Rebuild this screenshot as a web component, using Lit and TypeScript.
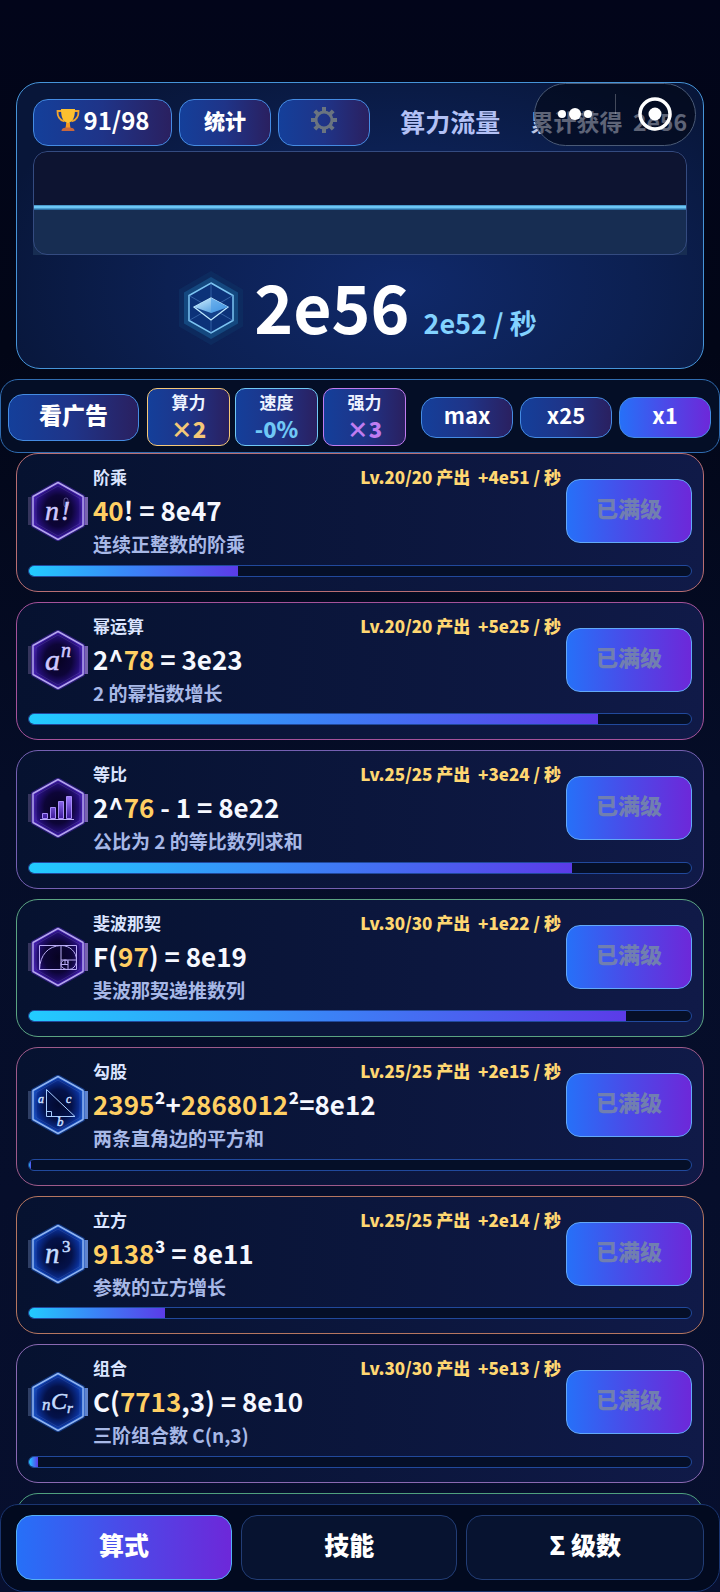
import { LitElement, html, svg, css, nothing } from "lit";
import { customElement, property, state } from "lit/decorators.js";
import { classMap } from "lit/directives/class-map.js";

type Tone = "violet" | "blue";

interface Upgrade {
  id: string;
  name: string;
  formula: Array<[string, boolean]>;
  desc: string;
  level: string;
  rate: string;
  progress: number;
  tone: Tone;
  border: string;
}

const UPGRADES: Upgrade[] = [
  { id: "factorial", name: "阶乘", formula: [["40", true], ["! = 8e47", false]], desc: "连续正整数的阶乘", level: "20/20", rate: "+4e51", progress: 31.5, tone: "violet", border: "coral" },
  { id: "power", name: "幂运算", formula: [["2^", false], ["78", true], [" = 3e23", false]], desc: "2 的幂指数增长", level: "20/20", rate: "+5e25", progress: 86, tone: "violet", border: "pink" },
  { id: "geometric", name: "等比", formula: [["2^", false], ["76", true], [" - 1 = 8e22", false]], desc: "公比为 2 的等比数列求和", level: "25/25", rate: "+3e24", progress: 82, tone: "violet", border: "purple" },
  { id: "fibonacci", name: "斐波那契", formula: [["F(", false], ["97", true], [") = 8e19", false]], desc: "斐波那契递推数列", level: "30/30", rate: "+1e22", progress: 90.2, tone: "violet", border: "green" },
  { id: "pythagoras", name: "勾股", formula: [["2395", true], ["²+", false], ["2868012", true], ["²=8e12", false]], desc: "两条直角边的平方和", level: "25/25", rate: "+2e15", progress: 0.3, tone: "blue", border: "rose" },
  { id: "cube", name: "立方", formula: [["9138", true], ["³ = 8e11", false]], desc: "参数的立方增长", level: "25/25", rate: "+2e14", progress: 20.5, tone: "blue", border: "orange" },
  { id: "combination", name: "组合", formula: [["C(", false], ["7713", true], [",3) = 8e10", false]], desc: "三阶组合数 C(n,3)", level: "30/30", rate: "+5e13", progress: 1.3, tone: "blue", border: "lilac" },
];

@customElement("hex-icon")
export class HexIcon extends LitElement {
  @property() kind = "";
  @property() tone: Tone = "violet";

  static styles = css`
    :host { display: block; width: 60px; height: 60px; }
    svg { display: block; width: 100%; height: 100%; }
    text {
      font-family: "Liberation Serif", serif;
      font-style: italic;
      font-weight: 400;
      fill: #cfc8ff;
      stroke: #cfc8ff;
      stroke-width: .5;
    }
    .upright { font-style: normal; }
    .blue text { fill: #c4dcff; stroke: #c4dcff; }
    .line { fill: none; stroke: #b9acf5; stroke-width: 1; }
    .blue .line { stroke: #a9cdff; }
  `;

  private glyph() {
    switch (this.kind) {
      case "factorial":
        return svg`<text x="17" y="39" font-size="28">n</text><text x="33" y="39" font-size="27">!</text>
          <rect class="line" x="36" y="17" width="4" height="9" rx="2" opacity=".45"/>`;
      case "power":
        return svg`<text x="17" y="40" font-size="30">a</text><text x="33" y="27" font-size="20">n</text>`;
      case "geometric":
        return svg`<path d="M12 41.500H46" class="line" stroke-width=".8"/>
          <path d="M14.500 40.500v-5h5v5zM22.500 40.500v-11h5v11zM30.500 40.500v-17h5v17zM38.500 40.500v-22h5v22z" fill="url(#bar)" stroke="#a78bfa" stroke-width="1"/>`;
      case "fibonacci":
        return svg`<path class="line" d="M11.500 18.500h37v24h-37zM33 18.500v24M33 33h15.500M40 33v9.500M33 37.500h7M37 33v4.500"/>
          <path class="line" stroke-width="1.200" d="M11.500 42.500C12 28 20 19 33 18.500C42 18.500 48.500 25 48.500 33C48.500 39 45 42.500 40 42.500C36 42.500 33 40 33 37.500C33 35 35 33 37 33C39 33 40 34 40 36"/>`;
      case "pythagoras":
        return svg`<path class="line" stroke-width="1.200" d="M18.500 14.500V41.500H47ZM18.500 36.500h5v5"/>
          <text x="10" y="28" font-size="12">a</text><text x="38" y="28" font-size="12">c</text><text x="29" y="51" font-size="13">b</text>`;
      case "cube":
        return svg`<text x="17" y="39" font-size="29">n</text><text class="upright" x="34" y="28" font-size="17">3</text>`;
      case "combination":
        return svg`<text x="14" y="38" font-size="17">n</text><text x="23" y="37" font-size="24">C</text><text x="39" y="41" font-size="15">r</text>`;
      default:
        return nothing;
    }
  }

  render() {
    const v = this.tone === "violet";
    const edge = v ? "#b3a4ee" : "#8fb4f2";
    const glow = v ? "#4a22b8" : "#1a55c8";
    const hex = "M30 1.500L55 15.500V44.500L30 58.500L5 44.500V15.500Z";
    return html`<svg viewBox="0 0 60 60" class=${this.tone} aria-hidden="true">
      <defs>
        <radialGradient id="core" cx=".5" cy=".5" r=".55">
          <stop offset="0" stop-color=${v ? "#070322" : "#020a30"} />
          <stop offset=".5" stop-color=${v ? "#0d0538" : "#04124a"} />
          <stop offset=".8" stop-color=${v ? "#260f7c" : "#0a2f96"} />
          <stop offset="1" stop-color=${glow} />
        </radialGradient>
        <linearGradient id="bar" x1="0" y1="0" x2="0" y2="1">
          <stop offset="0" stop-color="#9f7bff" />
          <stop offset="1" stop-color="#3b1a9a" />
        </linearGradient>
      </defs>
      <rect x="0" y="16" width="8" height="28" fill=${v ? "#4a4570" : "#41527c"} opacity=".7" />
      <rect x="52" y="16" width="8" height="28" fill=${v ? "#7763ae" : "#5f83cc"} />
      <path d=${hex} fill="url(#core)" stroke=${glow} stroke-width="4" stroke-opacity=".5" stroke-linejoin="round" />
      <path d=${hex} fill="none" stroke=${edge} stroke-width="1.500" stroke-linejoin="round" />
      <path d="M30 5L52 17.500V42.500L30 55L8 42.500V17.500Z" fill="none" stroke=${edge} stroke-opacity=".2" stroke-width=".8" />
      ${this.glyph()}
    </svg>`;
  }
}

@customElement("upgrade-card")
export class UpgradeCard extends LitElement {
  @property({ attribute: false }) item?: Upgrade;

  static styles = css`
    :host { display: block; flex: none; }
    .card {
      border: 1px solid var(--edge);
      border-radius: 22px;
      padding: 10px 11px 14px;
      background: linear-gradient(90deg, #061230, #101a48);
      display: flex;
      flex-direction: column;
      gap: 6px;
    }
    .coral { --edge: #b86e72; }
    .pink { --edge: #a5529a; }
    .purple { --edge: #7560b2; }
    .green { --edge: #5ba482; }
    .rose { --edge: #9e5a8a; }
    .orange { --edge: #b57660; }
    .lilac { --edge: #8a69b2; }
    .mint { --edge: #4fa07e; }
    .empty { min-height: 64px; }
    .main { display: flex; align-items: center; gap: 5px; }
    .body { flex: 1; min-width: 0; }
    .top {
      display: flex;
      justify-content: space-between;
      font-size: 17px;
      line-height: 26px;
    }
    .name { color: #dbe5ff; }
    .level { color: #ffd772; white-space: pre; font-weight: 900; }
    .formula {
      font-size: 26px;
      line-height: 40px;
      color: #f6f8ff;
      white-space: pre;
    }
    .hot { color: #ffcf63; }
    .desc { font-size: 19px; line-height: 1.5; color: #a7b8e6; }
    .name, .formula, .desc { margin: 0; font-weight: 700; }
    .name { font-size: inherit; }
    .buy {
      flex: none;
      width: 126px;
      height: 64px;
      box-sizing: border-box;
      padding: 0 0 8px;
      border: 1px solid #62a8f8;
      border-radius: 14px;
      background: linear-gradient(90deg, #2670f8, #4b4ae8 50%, #6d28d9);
      font: inherit;
      font-size: 22px;
      font-weight: 900;
      color: #717fb0;
    }
    .track {
      height: 12px;
      box-sizing: border-box;
      border: 1px solid #21499c;
      border-radius: 6px;
      background: #050f28;
      overflow: hidden;
    }
    .fill {
      height: 100%;
      background: linear-gradient(90deg, #22ccff, #3b82f6 50%, #5b3be8);
    }
  `;

  render() {
    const u = this.item;
    if (!u) return html`<div class="card mint empty"></div>`;
    return html`<article class=${classMap({ card: true, [u.border]: true })}>
      <div class="main">
        <hex-icon .kind=${u.id} .tone=${u.tone}></hex-icon>
        <div class="body">
          <div class="top">
            <h2 class="name">${u.name}</h2>
            <span class="level">Lv.${u.level} 产出  ${u.rate} / 秒</span>
          </div>
          <p class="formula">${u.formula.map(([t, hot]) => (hot ? html`<span class="hot">${t}</span>` : t))}</p>
          <p class="desc">${u.desc}</p>
        </div>
        <button class="buy" type="button" disabled>已满级</button>
      </div>
      <div class="track" role="progressbar" aria-label=${u.name} aria-valuenow=${u.progress}>
        <div class="fill" style="width:${u.progress}%"></div>
      </div>
    </article>`;
  }
}

@customElement("app-root")
export class AppRoot extends LitElement {
  @state() private amount = "x1";
  @state() private tab = "算式";

  static styles = css`
    :host {
      display: flex;
      flex-direction: column;
      height: 100vh;
      overflow: hidden;
      position: relative;
      box-sizing: border-box;
      padding-top: 82px;
      background: linear-gradient(180deg, #02051a, #020617 22%, #050d28 50%, #070f2e);
      font-family: "Noto Sans CJK SC", sans-serif;
      font-weight: 700;
      color: #fff;
    }
    button { font: inherit; color: inherit; margin: 0; box-sizing: border-box; }

    .panel {
      flex: none;
      margin: 0 16px;
      padding: 16px 16px 15px;
      border: 1px solid #4694d8;
      border-radius: 24px;
      background: radial-gradient(ellipse 62% 90% at 56% 72%, #10296a, #0c2052 55%, #081639);
    }
    .head { display: flex; align-items: center; gap: 7px; }
    .pill {
      height: 47px;
      width: 92px;
      padding: 0 0 6px;
      border: 1px solid #458be2;
      border-radius: 15px;
      background: linear-gradient(90deg, #143f9a, #1f3488 50%, #2a2060);
      font-size: 21px;
      font-weight: 900;
      display: flex;
      align-items: center;
      justify-content: center;
    }
    .wide { width: 139px; gap: 4px; font-size: 24px; font-weight: 700; }
    .trophy { width: 24px; height: 24px; }
    .gear { width: 28px; height: 28px; }
    .title { flex: 1; margin: 0; padding-bottom: 3px; text-align: center; font-size: 25px; line-height: 36px; color: #b3c1f5; }
    .total { padding-bottom: 3px; font-size: 23px; line-height: 36px; color: #bcc6e4; white-space: pre; }
    .chart {
      position: relative;
      margin-top: 5px;
      height: 104px;
      border-radius: 14px 14px 0 0;
      box-sizing: border-box;
      background: #0d1431;
      overflow: hidden;
    }
    .chart::after {
      content: "";
      position: absolute;
      inset: 0;
      border: 1px solid #344b80;
      border-radius: 14px;
    }
    .chart svg { display: block; width: 100%; height: 100%; }
    .balance {
      display: flex;
      align-items: center;
      justify-content: center;
      gap: 10px;
      margin-top: 8px;
      padding-right: 5px;
    }
    .coin { width: 66px; height: 76px; }
    .sum { display: flex; align-items: baseline; gap: 14px; padding-bottom: 6px; }
    .big { font-size: 66px; line-height: 84px; }
    .rate { font-size: 27px; color: #82d2ff; }

    .capsule {
      position: absolute;
      top: 83px;
      right: 24px;
      width: 162px;
      height: 63px;
      box-sizing: border-box;
      border: 1px solid #4a5a76;
      border-radius: 32px;
      background: #00020a80;
      display: flex;
      padding-bottom: 2px;
    }
    .cap { flex: 1; padding: 0; border: 0; background: none; display: grid; place-items: center; }
    .cap svg { width: 40px; height: 40px; }
    .rule { width: 1px; height: 20px; margin-top: 10px; background: #ffffff40; }

    .toolbar {
      flex: none;
      margin-top: 10px;
      padding: 8px 8px 6px;
      border: 1px solid #306cb0;
      border-radius: 18px;
      background: #040e26;
      display: flex;
      align-items: center;
      gap: 8px;
      position: relative;
    }
    .ad { width: 131px; font-size: 23px; margin-left: -1px; }
    .boosts { display: flex; gap: 5px; }
    .boost {
      width: 83px;
      height: 58px;
      border: 1px solid var(--tone);
      border-radius: 10px;
      background: linear-gradient(90deg, #143f9a, #1f3488 50%, #2a2060);
      color: #eef3ff;
      font-size: 17px;
      line-height: 26px;
      box-sizing: border-box;
      text-align: center;
    }
    .boost b { display: block; color: var(--tone); font-size: 22px; line-height: 26px; }
    .gold { --tone: #f5c878; }
    .cyan { --tone: #70c8f5; }
    .plum { --tone: #c07cf0; }
    .amounts { display: flex; flex: 1; gap: 7px; margin-left: 7px; }
    .amt { flex: 1; height: 41px; width: auto; font-size: 22px; font-weight: 700; }
    .on { background: linear-gradient(90deg, #2670f8, #4b4ae8 50%, #6d28d9); }

    .list {
      flex: 1;
      min-height: 0;
      overflow: hidden;
      padding: 0 16px;
      display: flex;
      flex-direction: column;
      gap: 10px;
    }

    .tabs {
      flex: none;
      display: flex;
      gap: 9px;
      padding: 10px 15px 11px;
      border: 1px solid #1a3570;
      border-radius: 18px 18px 24px 24px;
      background: #020a1f;
    }
    .tab {
      flex: 1 1 auto;
      height: 65px;
      padding: 0 0 7px;
      border: 1px solid #223d75;
      border-radius: 16px;
      background: #071330;
      font-size: 25px;
      font-weight: 900;
    }
    .tab.sel { border-color: #55b0f5; background: linear-gradient(90deg, #2670f8, #4b4ae8 50%, #6d28d9); }
  `;

  render() {
    return html`
      <section class="panel">
        <div class="head">
          <button class="pill wide" type="button">
            <svg class="trophy" viewBox="0 0 24 24" aria-hidden="true">
              <path d="M6 3H1.500c-.2 5 1.500 9 7 10.500M18 3h4.500c.2 5-1.500 9-7 10.500" fill="none" stroke="#f2a52c" stroke-width="1.800" />
              <path d="M5 1h14c0 7-1.500 12-5.500 13.500v4h-3v-4C6.500 13 5 8 5 1z" fill="#fdc02f" />
              <path d="M10.300 15h3.400l.8 5h-5z" fill="#f59a23" />
              <path d="M5.500 23c0-2.500 2-3.500 6.500-3.500s6.500 1 6.500 3.500z" fill="#c9683c" />
            </svg>
            91/98
          </button>
          <button class="pill" type="button">统计</button>
          <button class="pill" type="button" aria-label="设置">
            <svg class="gear" viewBox="0 0 28 28" aria-hidden="true">
              <g fill="none" stroke="#6a7480">
                <circle cx="14" cy="14" r="8" stroke-width="3" />
                <path d="M14 1v5M14 22v5M1 14h5M22 14h5M4.800 4.800l3.500 3.500M19.700 19.700l3.500 3.500M23.200 4.800l-3.500 3.500M8.300 19.700l-3.500 3.500" stroke-width="4" />
              </g>
            </svg>
          </button>
          <h1 class="title">算力流量</h1>
          <span class="total">累计获得  2e56</span>
        </div>
        <div class="chart">
          <svg viewBox="0 0 652 104" preserveAspectRatio="none" role="img" aria-label="算力流量">
            <path d="M0 56H652V104H0Z" fill="#172d52" />
            <path d="M0 56.500H652" fill="none" stroke="#2a6fa5" stroke-width="5" />
            <path d="M0 56H652" fill="none" stroke="#6cc6f4" stroke-width="3" />
          </svg>
        </div>
        <div class="balance">
          <svg class="coin" viewBox="0 0 66 76" aria-hidden="true">
            <defs>
              <linearGradient id="gem" x1="0" y1="0" x2="1" y2="1">
                <stop offset="0" stop-color="#d4f3ff" />
                <stop offset="1" stop-color="#2f86d8" />
              </linearGradient>
            </defs>
            <path d="M33 1L65 19.500V56.500L33 75L1 56.500V19.500Z" fill="#0e2f63" opacity=".7" />
            <path d="M33 7L60 22.500V53.500L33 69L6 53.500V22.500Z" fill="#14487f" />
            <path d="M33 13L55 25.500V50.500L33 63L11 50.500V25.500Z" fill="#0c3279" stroke="#7cc4f2" stroke-width="1.500" />
            <path d="M33 13V63M11 25.500L55 50.500M55 25.500L11 50.500" stroke="#5a8fd0" stroke-width=".7" opacity=".7" />
            <path d="M16 37L33 28L50 37L33 50Z" fill="#14418c" stroke="#bfe9ff" stroke-width="1.200" />
            <path d="M16 37L33 28L50 37L33 43Z" fill="url(#gem)" />
            <path d="M33 28V43L50 37Z" fill="#4a9be8" opacity=".6" />
          </svg>
          <div class="sum"><span class="big">2e56</span><span class="rate">2e52 / 秒</span></div>
        </div>
      </section>

      <section class="toolbar">
        <button class="pill ad" type="button">看广告</button>
        <div class="boosts">
          <div class="boost gold">算力<b>×2</b></div>
          <div class="boost cyan">速度<b>-0%</b></div>
          <div class="boost plum">强力<b>×3</b></div>
        </div>
        <div class="amounts">
          ${["max", "x25", "x1"].map(
            (a) => html`<button
              type="button"
              class=${classMap({ pill: true, amt: true, on: this.amount === a })}
              @click=${() => (this.amount = a)}
            >${a}</button>`,
          )}
        </div>
      </section>

      <main class="list">
        ${UPGRADES.map((u) => html`<upgrade-card .item=${u}></upgrade-card>`)}
        <upgrade-card></upgrade-card>
      </main>

      <nav class="tabs">
        ${["算式", "技能", "Σ 级数"].map(
          (t) => html`<button
            type="button"
            class=${classMap({ tab: true, sel: this.tab === t })}
            aria-current=${this.tab === t ? "page" : nothing}
            @click=${() => (this.tab = t)}
          >${t}</button>`,
        )}
      </nav>

      <div class="capsule">
        <button class="cap" type="button" aria-label="更多">
          <svg viewBox="0 0 40 40" fill="#fff" aria-hidden="true">
            <circle cx="7" cy="20" r="4" /><circle cx="20" cy="20" r="6" /><circle cx="33" cy="20" r="4" />
          </svg>
        </button>
        <span class="rule"></span>
        <button class="cap" type="button" aria-label="关闭">
          <svg viewBox="0 0 40 40" aria-hidden="true">
            <circle cx="20" cy="20" r="15" fill="none" stroke="#fff" stroke-width="3.500" /><circle cx="20" cy="20" r="6.500" fill="#fff" />
          </svg>
        </button>
      </div>
    `;
  }
}
